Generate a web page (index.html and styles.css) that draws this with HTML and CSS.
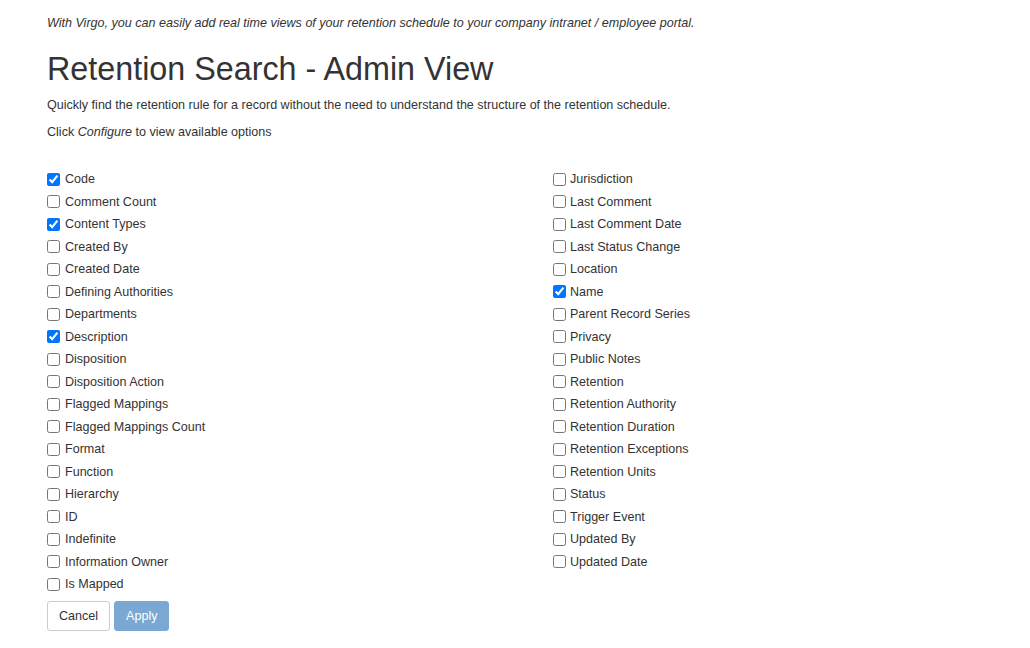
FILE: index.html
```html
<!DOCTYPE html>
<html>
<head>
<meta charset="utf-8">
<link rel="stylesheet" href="styles.css">
</head>
<body>
<div class="page">
  <p class="intro">With Virgo, you can easily add real time views of your retention schedule to your company intranet / employee portal.</p>
  <h1 class="title">Retention Search - Admin View</h1>
  <p class="desc">Quickly find the retention rule for a record without the need to understand the structure of the retention schedule.</p>
  <p class="hint">Click <em>Configure</em> to view available options</p>
  <div class="options">
    <div class="col">
      <label class="opt"><input type="checkbox" checked> Code</label>
      <label class="opt"><input type="checkbox"> Comment Count</label>
      <label class="opt"><input type="checkbox" checked> Content Types</label>
      <label class="opt"><input type="checkbox"> Created By</label>
      <label class="opt"><input type="checkbox"> Created Date</label>
      <label class="opt"><input type="checkbox"> Defining Authorities</label>
      <label class="opt"><input type="checkbox"> Departments</label>
      <label class="opt"><input type="checkbox" checked> Description</label>
      <label class="opt"><input type="checkbox"> Disposition</label>
      <label class="opt"><input type="checkbox"> Disposition Action</label>
      <label class="opt"><input type="checkbox"> Flagged Mappings</label>
      <label class="opt"><input type="checkbox"> Flagged Mappings Count</label>
      <label class="opt"><input type="checkbox"> Format</label>
      <label class="opt"><input type="checkbox"> Function</label>
      <label class="opt"><input type="checkbox"> Hierarchy</label>
      <label class="opt"><input type="checkbox"> ID</label>
      <label class="opt"><input type="checkbox"> Indefinite</label>
      <label class="opt"><input type="checkbox"> Information Owner</label>
      <label class="opt"><input type="checkbox"> Is Mapped</label>
    </div>
    <div class="col">
      <label class="opt"><input type="checkbox"> Jurisdiction</label>
      <label class="opt"><input type="checkbox"> Last Comment</label>
      <label class="opt"><input type="checkbox"> Last Comment Date</label>
      <label class="opt"><input type="checkbox"> Last Status Change</label>
      <label class="opt"><input type="checkbox"> Location</label>
      <label class="opt"><input type="checkbox" checked> Name</label>
      <label class="opt"><input type="checkbox"> Parent Record Series</label>
      <label class="opt"><input type="checkbox"> Privacy</label>
      <label class="opt"><input type="checkbox"> Public Notes</label>
      <label class="opt"><input type="checkbox"> Retention</label>
      <label class="opt"><input type="checkbox"> Retention Authority</label>
      <label class="opt"><input type="checkbox"> Retention Duration</label>
      <label class="opt"><input type="checkbox"> Retention Exceptions</label>
      <label class="opt"><input type="checkbox"> Retention Units</label>
      <label class="opt"><input type="checkbox"> Status</label>
      <label class="opt"><input type="checkbox"> Trigger Event</label>
      <label class="opt"><input type="checkbox"> Updated By</label>
      <label class="opt"><input type="checkbox"> Updated Date</label>
    </div>
  </div>
  <div class="actions">
    <button class="btn btn-default">Cancel</button>
    <button class="btn btn-primary" disabled>Apply</button>
  </div>
</div>
</body>
</html>
```

FILE: styles.css
```css
* { box-sizing: border-box; }
html, body { margin: 0; padding: 0; background: #fff; }
body {
  font-family: "Liberation Sans", Arial, sans-serif;
  font-size: 12.55px;
  line-height: 18px;
  color: #333;
}
.page {
  padding: 14px 0 0 47px;
}
.intro {
  margin: 0;
  font-style: italic;
}
.title {
  margin: 17px 0 0 0;
  font-size: 32.3px;
  line-height: 40px;
  font-weight: 400;
  color: #333;
}
.desc {
  margin: 7px 0 0 0;
}
.hint {
  margin: 9px 0 0 0;
}
.options {
  display: grid;
  grid-template-columns: 506px 506px;
  margin-top: 27px;
}
.col {
  display: flex;
  flex-direction: column;
}
.opt {
  display: flex;
  align-items: center;
  height: 22.5px;
  cursor: pointer;
}
.opt input {
  width: 13px;
  height: 13px;
  margin: 0 5px 0 0;
}
.col + .col .opt input {
  margin-right: 4px;
}
.actions {
  display: flex;
  gap: 4px;
  margin-top: 5px;
}
.btn {
  font-family: inherit;
  font-size: 12.55px;
  line-height: 18px;
  padding: 5px 11px;
  border-radius: 3px;
  border: 1px solid #ccc;
  cursor: pointer;
}
.btn-default {
  background: #fff;
  color: #333;
}
.btn-primary {
  background: #7aa7d4;
  border-color: #7aa7d4;
  color: #fff;
}
```
